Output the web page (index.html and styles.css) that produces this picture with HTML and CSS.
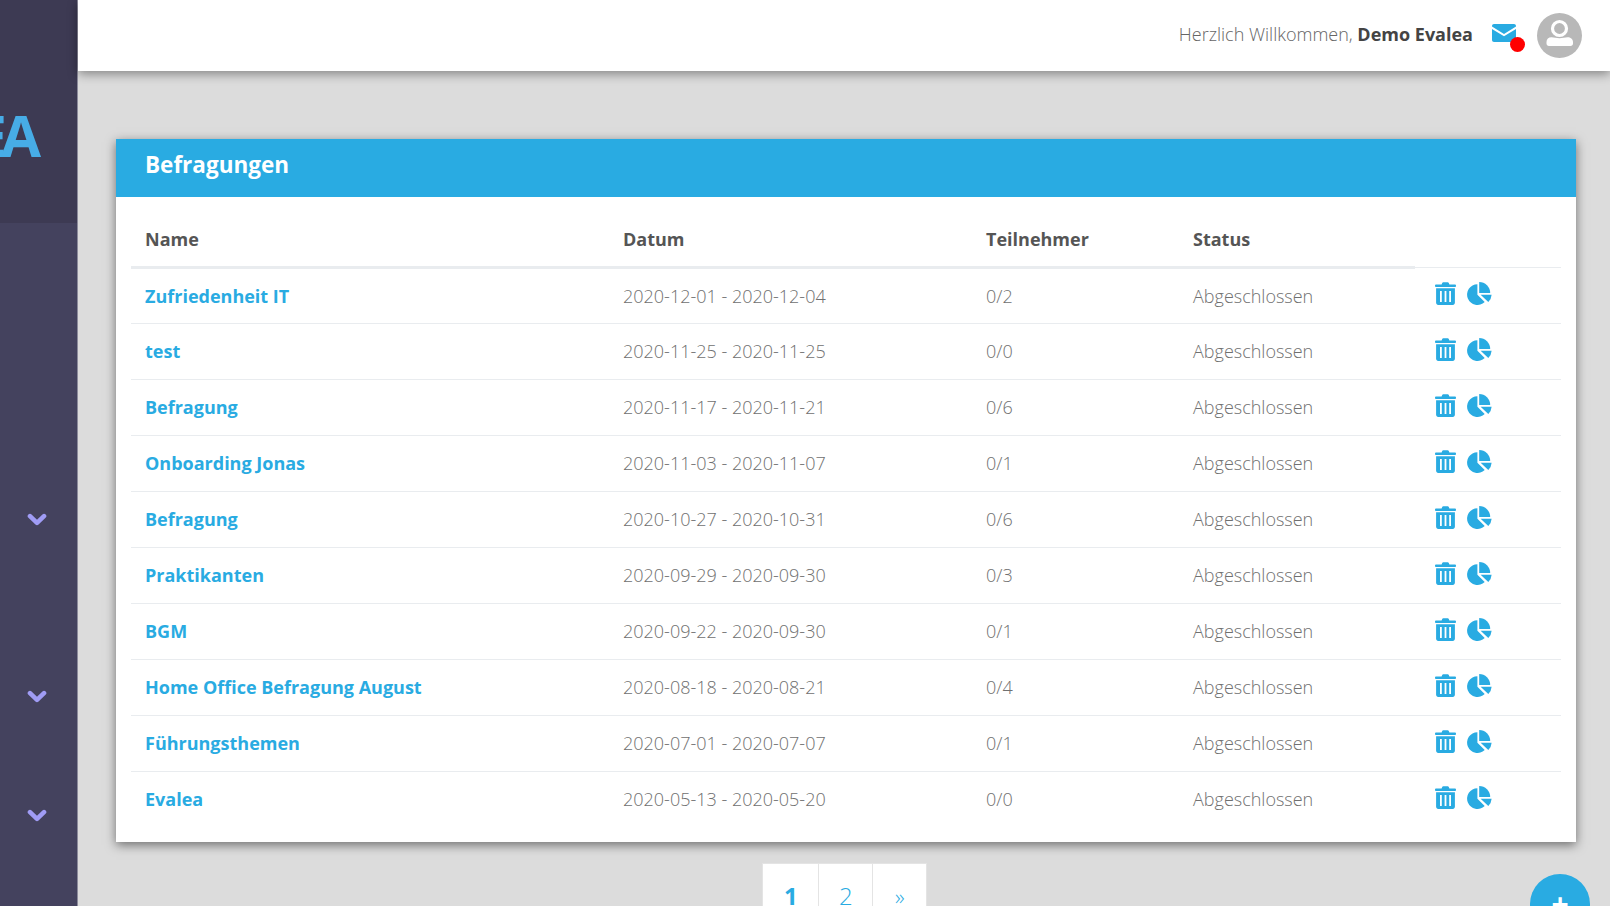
FILE: index.html

```html
<!DOCTYPE html>
<html lang="de">
<head>
  <meta charset="UTF-8" />
  <title>Befragungen</title>
  <link rel="stylesheet" href="styles.css">
</head>
<body>
  <svg class="icon-defs" width="0" height="0" aria-hidden="true">
    <symbol id="trash" viewBox="0 0 21 23">
      <path d="M0 3.4 C0 2.9 .4 2.6 .9 2.6 H6.6 L7.2 1.1 C7.4 .6 7.8 .3 8.3 .3 H12.7 C13.2 .3 13.6 .6 13.8 1.1 L14.4 2.6 H20.1 C20.6 2.6 21 2.9 21 3.4 V4.2 C21 4.6 20.6 5 20.1 5 H.9 C.4 5 0 4.6 0 4.2 Z"/>
      <path fill-rule="evenodd" d="M1.1 6.3 H19.9 V20.8 C19.9 22 19 23 17.8 23 H3.2 C2 23 1.1 22 1.1 20.8 Z M5 9 V20 H6.8 V9 Z M9.6 9 V20 H11.4 V9 Z M14.2 9 V20 H16 V9 Z"/>
    </symbol>
    <symbol id="pie" viewBox="0 0 25 23">
      <path d="M10.4 2.2 A10.4 10.4 0 1 0 17.7 20.1 L10.4 12.8 Z"/>
      <path d="M12.2 0 A11 11 0 0 1 23.2 10.9 H12.2 Z"/>
      <path d="M13.6 12.7 H24.6 A10.6 10.6 0 0 1 21.3 19.9 Z"/>
    </symbol>
    <symbol id="chevron" viewBox="0 0 20 13">
      <path d="M3 3.2 L10 9.8 L17 3.2" fill="none" stroke="#a09cf5" stroke-width="4.6" stroke-linecap="round" stroke-linejoin="round"/>
    </symbol>
  </svg>

  <div class="layout">
    <aside class="sidebar">
      <div class="brand"><span class="brand-text">EVALEA</span></div>
      <nav class="side-nav">
        <svg class="chevron chevron-1"><use href="#chevron"/></svg>
        <svg class="chevron chevron-2"><use href="#chevron"/></svg>
        <svg class="chevron chevron-3"><use href="#chevron"/></svg>
      </nav>
    </aside>

    <div class="main">
      <header class="topbar">
        <span class="welcome">Herzlich Willkommen, <strong>Demo Evalea</strong></span>
        <span class="mail">
          <svg width="24" height="18" viewBox="0 0 24 18">
            <path class="mail-body" d="M2 0 H22 C23.1 0 24 .9 24 2 V2.6 L12 10 L0 2.6 V2 C0 .9 .9 0 2 0 Z M0 5 L12 12.3 L24 5 V16 C24 17.1 23.1 18 22 18 H2 C.9 18 0 17.1 0 16 Z"/>
          </svg>
          <span class="mail-dot"></span>
        </span>
        <span class="avatar">
          <svg width="45" height="45" viewBox="0 0 45 45">
            <circle cx="22.5" cy="22.5" r="22.5" fill="#b8b8b8"/>
            <circle cx="22.5" cy="15.5" r="7" fill="none" stroke="#fff" stroke-width="3.2"/>
            <path d="M9.5 29 C9.5 26 11.5 24.3 14.5 24.3 C17 24.3 19.5 25.3 22.5 25.3 C25.5 25.3 28 24.3 30.5 24.3 C33.5 24.3 36 26 36 29 V30.5 C36 32 35 33 33.5 33 H12 C10.5 33 9.5 32 9.5 30.5 Z" fill="#fff"/>
          </svg>
        </span>
      </header>

      <main class="content">
        <section class="card">
          <h1 class="card-title">Befragungen</h1>
          <div class="card-body">
            <table class="survey-table">
              <colgroup>
                <col class="col-name"><col class="col-date"><col class="col-count"><col class="col-status"><col class="col-actions">
              </colgroup>
              <thead>
                <tr><th>Name</th><th>Datum</th><th>Teilnehmer</th><th>Status</th><th class="th-empty"></th></tr>
              </thead>
              <tbody>
                <tr><td><a href="#">Zufriedenheit IT</a></td><td>2020-12-01 - 2020-12-04</td><td>0/2</td><td>Abgeschlossen</td><td class="actions"><svg class="ic-trash"><use href="#trash"/></svg><svg class="ic-pie"><use href="#pie"/></svg></td></tr>
                <tr><td><a href="#">test</a></td><td>2020-11-25 - 2020-11-25</td><td>0/0</td><td>Abgeschlossen</td><td class="actions"><svg class="ic-trash"><use href="#trash"/></svg><svg class="ic-pie"><use href="#pie"/></svg></td></tr>
                <tr><td><a href="#">Befragung</a></td><td>2020-11-17 - 2020-11-21</td><td>0/6</td><td>Abgeschlossen</td><td class="actions"><svg class="ic-trash"><use href="#trash"/></svg><svg class="ic-pie"><use href="#pie"/></svg></td></tr>
                <tr><td><a href="#">Onboarding Jonas</a></td><td>2020-11-03 - 2020-11-07</td><td>0/1</td><td>Abgeschlossen</td><td class="actions"><svg class="ic-trash"><use href="#trash"/></svg><svg class="ic-pie"><use href="#pie"/></svg></td></tr>
                <tr><td><a href="#">Befragung</a></td><td>2020-10-27 - 2020-10-31</td><td>0/6</td><td>Abgeschlossen</td><td class="actions"><svg class="ic-trash"><use href="#trash"/></svg><svg class="ic-pie"><use href="#pie"/></svg></td></tr>
                <tr><td><a href="#">Praktikanten</a></td><td>2020-09-29 - 2020-09-30</td><td>0/3</td><td>Abgeschlossen</td><td class="actions"><svg class="ic-trash"><use href="#trash"/></svg><svg class="ic-pie"><use href="#pie"/></svg></td></tr>
                <tr><td><a href="#">BGM</a></td><td>2020-09-22 - 2020-09-30</td><td>0/1</td><td>Abgeschlossen</td><td class="actions"><svg class="ic-trash"><use href="#trash"/></svg><svg class="ic-pie"><use href="#pie"/></svg></td></tr>
                <tr><td><a href="#">Home Office Befragung August</a></td><td>2020-08-18 - 2020-08-21</td><td>0/4</td><td>Abgeschlossen</td><td class="actions"><svg class="ic-trash"><use href="#trash"/></svg><svg class="ic-pie"><use href="#pie"/></svg></td></tr>
                <tr><td><a href="#">Führungsthemen</a></td><td>2020-07-01 - 2020-07-07</td><td>0/1</td><td>Abgeschlossen</td><td class="actions"><svg class="ic-trash"><use href="#trash"/></svg><svg class="ic-pie"><use href="#pie"/></svg></td></tr>
                <tr><td><a href="#">Evalea</a></td><td>2020-05-13 - 2020-05-20</td><td>0/0</td><td>Abgeschlossen</td><td class="actions"><svg class="ic-trash"><use href="#trash"/></svg><svg class="ic-pie"><use href="#pie"/></svg></td></tr>
              </tbody>
            </table>
          </div>
        </section>

        <ul class="pagination">
          <li class="page active"><a href="#">1</a></li>
          <li class="page"><a href="#">2</a></li>
          <li class="page page-next"><a href="#">»</a></li>
        </ul>
        <button class="fab" type="button">+</button>
      </main>
    </div>
  </div>
</body>
</html>
```

FILE: styles.css

```css
* {
  box-sizing: border-box;
}
html, body {
  height: 100%;
}
body {
  margin: 0;
  overflow: hidden;
  font-family: "Open Sans", sans-serif;
  font-weight: 300;
  font-size: 18px;
  color: #555;
  background-color: #dcdcdc;
}
a {
  color: #29abe2;
  text-decoration: none;
}
.icon-defs {
  position: absolute;
}
.layout {
  display: flex;
  height: 906px;
}

/* sidebar */
.sidebar {
  width: 78px;
  flex-shrink: 0;
  background-color: #44425e;
  border-right: 1px solid #8c8b9b;
  display: flex;
  flex-direction: column;
}
.brand {
  height: 223px;
  background-color: #3d3a53;
  overflow: hidden;
  padding-top: 95px;
  display: flex;
  justify-content: flex-end;
}
.brand-text {
  color: #47ace6;
  font-weight: 700;
  font-size: 58px;
  line-height: 80px;
  letter-spacing: -6px;
  margin-right: 42px;
  white-space: nowrap;
}
.side-nav {
  position: relative;
  flex: 1;
}
.chevron {
  position: absolute;
  left: 27px;
  width: 20px;
  height: 13px;
}
.chevron-1 { top: 290px; }
.chevron-2 { top: 467px; }
.chevron-3 { top: 586px; }

/* top bar */
.main {
  flex: 1;
  min-width: 0;
  display: flex;
  flex-direction: column;
}
.topbar {
  flex-shrink: 0;
  height: 71px;
  background: #fff;
  box-shadow: 0 3px 10px rgba(0, 0, 0, 0.4);
  display: flex;
  align-items: center;
  justify-content: flex-end;
  padding-right: 28px;
  position: relative;
  z-index: 2;
}
.welcome {
  margin-bottom: 4px;
  color: #666;
}
.welcome strong {
  font-weight: 700;
  color: #444;
}
.mail {
  position: relative;
  display: block;
  width: 24px;
  height: 18px;
  margin-left: 19px;
  margin-right: 21px;
  margin-bottom: 5px;
}
.mail svg {
  display: block;
}
.mail-body {
  fill: #29abe2;
}
.mail-dot {
  position: absolute;
  right: -8.5px;
  bottom: -10px;
  width: 15px;
  height: 15px;
  border-radius: 50%;
  background: #f00;
}
.avatar {
  display: block;
  height: 45px;
}
.avatar svg {
  display: block;
}

/* card */
.content {
  flex: 1;
  min-height: 0;
  position: relative;
  padding: 68px 34px 0 37.5px;
}
.card {
  background: #fff;
  box-shadow: 0 3px 10px rgba(0, 0, 0, 0.5);
}
.card-title {
  margin: 0;
  height: 58px;
  background-color: #29abe2;
  color: #fff;
  font-size: 22.5px;
  font-weight: 700;
  line-height: 52px;
  padding-left: 29.5px;
}
.card-body {
  padding: 15px 15px 15px;
}
.survey-table {
  width: 100%;
  border-collapse: collapse;
  table-layout: fixed;
}
.col-name { width: 478px; }
.col-date { width: 363px; }
.col-count { width: 207px; }
.col-status { width: 236px; }
.survey-table th {
  text-align: left;
  font-weight: 700;
  color: #555;
  height: 55px;
  padding: 0 14.5px;
  border-bottom: 3px solid #e9ecef;
}
.survey-table th.th-empty {
  border-bottom: 1px solid #e9ecef;
}
.survey-table td {
  height: 56px;
  padding: 0 14.5px;
  border-bottom: 1px solid #e9ecef;
  color: #707070;
}
.survey-table tbody tr:last-child td {
  border-bottom: 0;
}
.survey-table td a {
  font-weight: 700;
}
.actions {
  white-space: nowrap;
}
.ic-trash, .ic-pie {
  fill: #29abe2;
  vertical-align: middle;
  position: relative;
  top: -3px;
}
.ic-trash {
  width: 21px;
  height: 23px;
  margin-left: 6px;
}
.ic-pie {
  width: 25px;
  height: 23px;
  margin-left: 11px;
}

/* pagination and add button */
.pagination {
  list-style: none;
  display: flex;
  justify-content: center;
  margin: 21px 0 0;
  padding: 0 1px 0 0;
}
.page {
  width: 55px;
  height: 70px;
  background: #fff;
  border: 1px solid #e4e4e4;
  margin-left: -1px;
  text-align: center;
  font-size: 24px;
  line-height: 60px;
}
.page.active {
  width: 57px;
}
.page a {
  display: block;
  padding-top: 2px;
}
.page.active a {
  font-weight: 700;
  text-decoration: underline;
}
.page-next {
  font-size: 22px;
}
.fab {
  position: absolute;
  right: 20px;
  top: 803px;
  width: 60px;
  height: 60px;
  border: 0;
  border-radius: 50%;
  background-color: #29abe2;
  color: #fff;
  font-family: "Open Sans", sans-serif;
  font-weight: 700;
  font-size: 30px;
  line-height: 1;
  padding: 0;
}
```
